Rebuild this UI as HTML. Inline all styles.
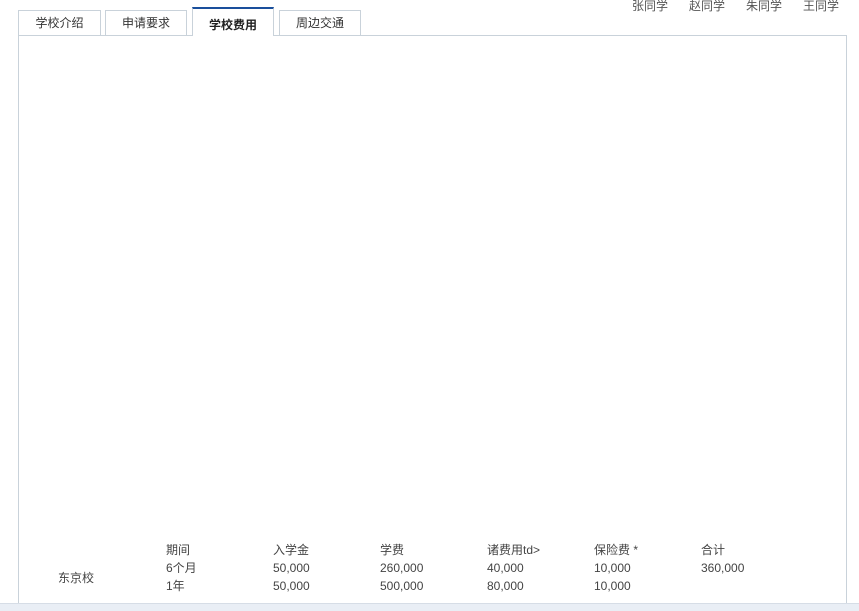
<!DOCTYPE html>
<html><head><meta charset="utf-8"><style>
html,body{margin:0;width:859px;height:611px;overflow:hidden}
body{background:#fff;font-family:"Liberation Sans","Noto Sans CJK SC",sans-serif;font-size:12px;color:#444;position:relative}
.t{position:absolute;white-space:nowrap;line-height:16px}
.tab{position:absolute;top:10px;height:25px;border:1px solid #c9d2da;border-bottom:none;background:#fff;text-align:center;line-height:24px;font-size:12px;color:#333;box-sizing:border-box}
.panel{position:absolute;left:18px;top:35px;width:829px;height:580px;border:1px solid #c9d2da;box-sizing:border-box}
.bar{position:absolute;left:0;top:603px;width:859px;height:8px;background:#e9eef5;border-top:1px solid #d6dde6}
</style></head><body>
<div class="panel"></div>
<div class="tab" style="left:18px;width:83px">学校介绍</div>
<div class="tab" style="left:105px;width:82px">申请要求</div>
<div class="tab" style="left:192px;top:7px;height:29px;line-height:32px;width:82px;border-top:2px solid #1a4f9c;font-weight:bold;color:#222">学校费用</div>
<div class="tab" style="left:279px;width:82px">周边交通</div>
<div class="t" style="left:632px;top:-2px;color:#555">张同学</div>
<div class="t" style="left:689px;top:-2px;color:#555">赵同学</div>
<div class="t" style="left:746px;top:-2px;color:#555">朱同学</div>
<div class="t" style="left:803px;top:-2px;color:#555">王同学</div>
<div class="t" style="left:58px;top:570px">东京校</div>
<div class="t" style="left:166px;top:542px">期间</div>
<div class="t" style="left:166px;top:560px">6个月</div>
<div class="t" style="left:166px;top:578px">1年</div>
<div class="t" style="left:273px;top:542px">入学金</div>
<div class="t" style="left:273px;top:560px">50,000</div>
<div class="t" style="left:273px;top:578px">50,000</div>
<div class="t" style="left:380px;top:542px">学费</div>
<div class="t" style="left:380px;top:560px">260,000</div>
<div class="t" style="left:380px;top:578px">500,000</div>
<div class="t" style="left:487px;top:542px">诸费用td&gt;</div>
<div class="t" style="left:487px;top:560px">40,000</div>
<div class="t" style="left:487px;top:578px">80,000</div>
<div class="t" style="left:594px;top:542px">保险费 *</div>
<div class="t" style="left:594px;top:560px">10,000</div>
<div class="t" style="left:594px;top:578px">10,000</div>
<div class="t" style="left:701px;top:542px">合计</div>
<div class="t" style="left:701px;top:560px">360,000</div>
<div class="bar"></div>
</body></html>
